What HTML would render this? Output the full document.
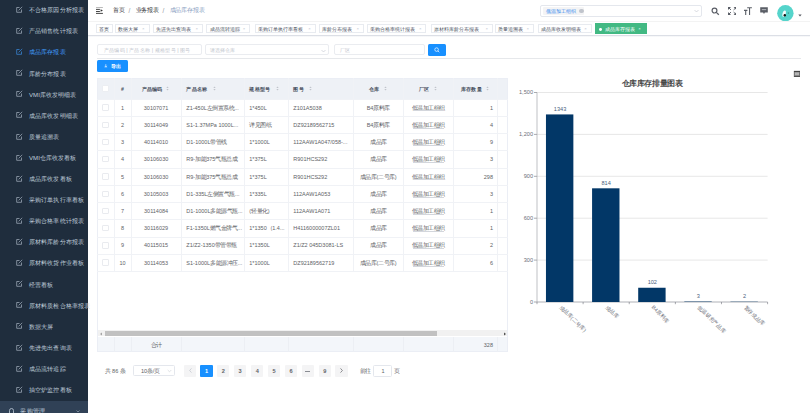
<!DOCTYPE html><html><head><meta charset="utf-8"><style>
*{margin:0;padding:0;box-sizing:border-box}
html,body{width:810px;height:413px;overflow:hidden;background:#fff;font-family:"Liberation Sans", sans-serif}
.ab{position:absolute;white-space:nowrap}
.t{position:absolute;white-space:nowrap;line-height:1}
i{font-style:normal;display:inline-block;width:1em;text-align:center}
.nocjk i{position:relative}
.cb{display:none}.nocjk .cb{display:inline}
.nocjk i::before{content:'';position:absolute;left:var(--bl,0.06em);right:var(--bl,0.06em);top:var(--bt,0.03em);height:var(--bh,0.8em);background:currentColor;opacity:var(--bo,0.3);border-radius:0.1em}
</style><script>(function(){var d=document.documentElement,s=document.createElement('span');s.style.cssText='position:absolute;left:-999px;top:0;font:100px "Liberation Sans";white-space:nowrap';s.textContent='库存';d.appendChild(s);var w=s.getBoundingClientRect().width;d.removeChild(s);if(w<180)d.className+=' nocjk';})();</script></head><body>
<div class="ab" style="left:0;top:0;width:88.3px;height:413px;background:#1f2d3d"></div><svg class="ab" style="left:15.9px;top:5.8999999999999995px" width="7" height="7" viewBox="0 0 7 7"><path d="M5.5 3.5V6.3H0.7V1.5H3.5" fill="none" stroke="#bfcbd9" stroke-width="0.6"/><path d="M2.6 4.4L6.2 0.8" stroke="#bfcbd9" stroke-width="0.6"/></svg><div class="t" style="left:29px;top:7.20px;font-size:6.1px;color:#bfcbd9"><i>不</i><i>合</i><i>格</i><i>原</i><i>因</i><i>分</i><i>析</i><i>报</i><i>表</i></div><svg class="ab" style="left:15.9px;top:27.0px" width="7" height="7" viewBox="0 0 7 7"><path d="M5.5 3.5V6.3H0.7V1.5H3.5" fill="none" stroke="#bfcbd9" stroke-width="0.6"/><path d="M2.6 4.4L6.2 0.8" stroke="#bfcbd9" stroke-width="0.6"/></svg><div class="t" style="left:29px;top:28.30px;font-size:6.1px;color:#bfcbd9"><i>产</i><i>品</i><i>销</i><i>售</i><i>统</i><i>计</i><i>报</i><i>表</i></div><svg class="ab" style="left:15.9px;top:48.10000000000001px" width="7" height="7" viewBox="0 0 7 7"><path d="M5.5 3.5V6.3H0.7V1.5H3.5" fill="none" stroke="#409eff" stroke-width="0.6"/><path d="M2.6 4.4L6.2 0.8" stroke="#409eff" stroke-width="0.6"/></svg><div class="t" style="left:29px;top:49.40px;font-size:6.1px;color:#409eff"><i>成</i><i>品</i><i>库</i><i>存</i><i>报</i><i>表</i></div><svg class="ab" style="left:15.9px;top:69.2px" width="7" height="7" viewBox="0 0 7 7"><path d="M5.5 3.5V6.3H0.7V1.5H3.5" fill="none" stroke="#bfcbd9" stroke-width="0.6"/><path d="M2.6 4.4L6.2 0.8" stroke="#bfcbd9" stroke-width="0.6"/></svg><div class="t" style="left:29px;top:70.50px;font-size:6.1px;color:#bfcbd9"><i>库</i><i>龄</i><i>分</i><i>布</i><i>报</i><i>表</i></div><svg class="ab" style="left:15.9px;top:90.30000000000001px" width="7" height="7" viewBox="0 0 7 7"><path d="M5.5 3.5V6.3H0.7V1.5H3.5" fill="none" stroke="#bfcbd9" stroke-width="0.6"/><path d="M2.6 4.4L6.2 0.8" stroke="#bfcbd9" stroke-width="0.6"/></svg><div class="t" style="left:29px;top:91.60px;font-size:6.1px;color:#bfcbd9">VMI<i>库</i><i>收</i><i>发</i><i>明</i><i>细</i><i>表</i></div><svg class="ab" style="left:15.9px;top:111.4px" width="7" height="7" viewBox="0 0 7 7"><path d="M5.5 3.5V6.3H0.7V1.5H3.5" fill="none" stroke="#bfcbd9" stroke-width="0.6"/><path d="M2.6 4.4L6.2 0.8" stroke="#bfcbd9" stroke-width="0.6"/></svg><div class="t" style="left:29px;top:112.70px;font-size:6.1px;color:#bfcbd9"><i>成</i><i>品</i><i>库</i><i>收</i><i>发</i><i>明</i><i>细</i><i>表</i></div><svg class="ab" style="left:15.9px;top:132.5px" width="7" height="7" viewBox="0 0 7 7"><path d="M5.5 3.5V6.3H0.7V1.5H3.5" fill="none" stroke="#bfcbd9" stroke-width="0.6"/><path d="M2.6 4.4L6.2 0.8" stroke="#bfcbd9" stroke-width="0.6"/></svg><div class="t" style="left:29px;top:133.80px;font-size:6.1px;color:#bfcbd9"><i>质</i><i>量</i><i>追</i><i>溯</i><i>表</i></div><svg class="ab" style="left:15.9px;top:153.6px" width="7" height="7" viewBox="0 0 7 7"><path d="M5.5 3.5V6.3H0.7V1.5H3.5" fill="none" stroke="#bfcbd9" stroke-width="0.6"/><path d="M2.6 4.4L6.2 0.8" stroke="#bfcbd9" stroke-width="0.6"/></svg><div class="t" style="left:29px;top:154.90px;font-size:6.1px;color:#bfcbd9">VMI<i>仓</i><i>库</i><i>收</i><i>发</i><i>看</i><i>板</i></div><svg class="ab" style="left:15.9px;top:174.7px" width="7" height="7" viewBox="0 0 7 7"><path d="M5.5 3.5V6.3H0.7V1.5H3.5" fill="none" stroke="#bfcbd9" stroke-width="0.6"/><path d="M2.6 4.4L6.2 0.8" stroke="#bfcbd9" stroke-width="0.6"/></svg><div class="t" style="left:29px;top:176.00px;font-size:6.1px;color:#bfcbd9"><i>成</i><i>品</i><i>库</i><i>收</i><i>发</i><i>看</i><i>板</i></div><svg class="ab" style="left:15.9px;top:195.79999999999998px" width="7" height="7" viewBox="0 0 7 7"><path d="M5.5 3.5V6.3H0.7V1.5H3.5" fill="none" stroke="#bfcbd9" stroke-width="0.6"/><path d="M2.6 4.4L6.2 0.8" stroke="#bfcbd9" stroke-width="0.6"/></svg><div class="t" style="left:29px;top:197.10px;font-size:6.1px;color:#bfcbd9"><i>采</i><i>购</i><i>订</i><i>单</i><i>执</i><i>行</i><i>率</i><i>看</i><i>板</i></div><svg class="ab" style="left:15.9px;top:216.89999999999998px" width="7" height="7" viewBox="0 0 7 7"><path d="M5.5 3.5V6.3H0.7V1.5H3.5" fill="none" stroke="#bfcbd9" stroke-width="0.6"/><path d="M2.6 4.4L6.2 0.8" stroke="#bfcbd9" stroke-width="0.6"/></svg><div class="t" style="left:29px;top:218.20px;font-size:6.1px;color:#bfcbd9"><i>采</i><i>购</i><i>合</i><i>格</i><i>率</i><i>统</i><i>计</i><i>报</i><i>表</i></div><svg class="ab" style="left:15.9px;top:238.0px" width="7" height="7" viewBox="0 0 7 7"><path d="M5.5 3.5V6.3H0.7V1.5H3.5" fill="none" stroke="#bfcbd9" stroke-width="0.6"/><path d="M2.6 4.4L6.2 0.8" stroke="#bfcbd9" stroke-width="0.6"/></svg><div class="t" style="left:29px;top:239.30px;font-size:6.1px;color:#bfcbd9"><i>原</i><i>材</i><i>料</i><i>库</i><i>龄</i><i>分</i><i>布</i><i>报</i><i>表</i></div><svg class="ab" style="left:15.9px;top:259.1px" width="7" height="7" viewBox="0 0 7 7"><path d="M5.5 3.5V6.3H0.7V1.5H3.5" fill="none" stroke="#bfcbd9" stroke-width="0.6"/><path d="M2.6 4.4L6.2 0.8" stroke="#bfcbd9" stroke-width="0.6"/></svg><div class="t" style="left:29px;top:260.40px;font-size:6.1px;color:#bfcbd9"><i>原</i><i>材</i><i>料</i><i>收</i><i>货</i><i>作</i><i>业</i><i>看</i><i>板</i></div><svg class="ab" style="left:15.9px;top:280.2px" width="7" height="7" viewBox="0 0 7 7"><path d="M5.5 3.5V6.3H0.7V1.5H3.5" fill="none" stroke="#bfcbd9" stroke-width="0.6"/><path d="M2.6 4.4L6.2 0.8" stroke="#bfcbd9" stroke-width="0.6"/></svg><div class="t" style="left:29px;top:281.50px;font-size:6.1px;color:#bfcbd9"><i>经</i><i>营</i><i>看</i><i>板</i></div><svg class="ab" style="left:15.9px;top:301.3px" width="7" height="7" viewBox="0 0 7 7"><path d="M5.5 3.5V6.3H0.7V1.5H3.5" fill="none" stroke="#bfcbd9" stroke-width="0.6"/><path d="M2.6 4.4L6.2 0.8" stroke="#bfcbd9" stroke-width="0.6"/></svg><div class="t" style="left:29px;top:302.60px;font-size:6.1px;color:#bfcbd9"><i>原</i><i>材</i><i>料</i><i>质</i><i>检</i><i>合</i><i>格</i><i>率</i><i>报</i><i>表</i></div><svg class="ab" style="left:15.9px;top:322.4px" width="7" height="7" viewBox="0 0 7 7"><path d="M5.5 3.5V6.3H0.7V1.5H3.5" fill="none" stroke="#bfcbd9" stroke-width="0.6"/><path d="M2.6 4.4L6.2 0.8" stroke="#bfcbd9" stroke-width="0.6"/></svg><div class="t" style="left:29px;top:323.70px;font-size:6.1px;color:#bfcbd9"><i>数</i><i>据</i><i>大</i><i>屏</i></div><svg class="ab" style="left:15.9px;top:343.5px" width="7" height="7" viewBox="0 0 7 7"><path d="M5.5 3.5V6.3H0.7V1.5H3.5" fill="none" stroke="#bfcbd9" stroke-width="0.6"/><path d="M2.6 4.4L6.2 0.8" stroke="#bfcbd9" stroke-width="0.6"/></svg><div class="t" style="left:29px;top:344.80px;font-size:6.1px;color:#bfcbd9"><i>先</i><i>进</i><i>先</i><i>出</i><i>查</i><i>询</i><i>表</i></div><svg class="ab" style="left:15.9px;top:364.6px" width="7" height="7" viewBox="0 0 7 7"><path d="M5.5 3.5V6.3H0.7V1.5H3.5" fill="none" stroke="#bfcbd9" stroke-width="0.6"/><path d="M2.6 4.4L6.2 0.8" stroke="#bfcbd9" stroke-width="0.6"/></svg><div class="t" style="left:29px;top:365.90px;font-size:6.1px;color:#bfcbd9"><i>成</i><i>品</i><i>流</i><i>转</i><i>追</i><i>踪</i></div><svg class="ab" style="left:15.9px;top:385.7px" width="7" height="7" viewBox="0 0 7 7"><path d="M5.5 3.5V6.3H0.7V1.5H3.5" fill="none" stroke="#bfcbd9" stroke-width="0.6"/><path d="M2.6 4.4L6.2 0.8" stroke="#bfcbd9" stroke-width="0.6"/></svg><div class="t" style="left:29px;top:387.00px;font-size:6.1px;color:#bfcbd9"><i>抽</i><i>空</i><i>炉</i><i>监</i><i>控</i><i>看</i><i>板</i></div><div class="ab" style="left:0;top:400.5px;width:88.3px;height:13px;background:#304156"></div><div class="t" style="left:20.4px;top:408px;font-size:6.2px;color:#bfcbd9"><i>采</i><i>购</i><i>管</i><i>理</i></div><svg class="ab" style="left:8.6px;top:407.5px" width="5" height="6" viewBox="0 0 5 6"><path d="M0.5 6V2.5A2 2 0 0 1 4.5 2.5V6" fill="none" stroke="#bfcbd9" stroke-width="0.8"/></svg><svg class="ab" style="left:76px;top:410px" width="4" height="3" viewBox="0 0 4 3"><path d="M0.5 0.5L2 2L3.5 0.5" fill="none" stroke="#bfcbd9" stroke-width="0.5"/></svg><svg class="ab" style="left:95.9px;top:6.9px" width="7" height="7" viewBox="0 0 7 7"><rect x="0" y="0.1" width="6.9" height="0.8" fill="#aaa"/><rect x="0" y="1.9" width="3.9" height="0.9" fill="#333"/><rect x="0" y="4.1" width="3.9" height="0.9" fill="#333"/><path d="M4.6 2.3L6.9 3.5L4.6 4.7Z" fill="#333"/><rect x="0" y="5.9" width="6.9" height="0.9" fill="#333"/></svg><div class="t" style="left:113.2px;top:8.2px;font-size:5.9px;color:#303133;font-weight:500"><i>首</i><i>页</i></div><div class="t" style="left:128.6px;top:8px;font-size:6.4px;color:#8e939b">/</div><div class="t" style="left:135.6px;top:8.2px;font-size:5.9px;color:#303133;font-weight:500"><i>业</i><i>务</i><i>报</i><i>表</i></div><div class="t" style="left:162.4px;top:8px;font-size:6.4px;color:#8e939b">/</div><div class="t" style="left:169.5px;top:8.2px;font-size:5.9px;color:#8aa0bf"><i>成</i><i>品</i><i>库</i><i>存</i><i>报</i><i>表</i></div><div class="ab" style="left:540.4px;top:5.3px;width:161.6px;height:11.8px;border:0.5px solid #e4e7ed;border-radius:2px"></div><div class="ab" style="left:543px;top:7.4px;width:40.6px;height:7.8px;background:#f4f4f5;border-radius:1px"></div><div class="t" style="left:546px;top:9px;font-size:5.0px;color:#2f86ef"><i>低</i><i>温</i><i>加</i><i>工</i><i>组</i><i>织</i></div><div class="ab" style="left:579.2px;top:9px;width:4.4px;height:4.4px;border-radius:50%;background:#c0c4cc"></div><svg class="ab" style="left:694px;top:9.2px" width="5" height="4" viewBox="0 0 5 4"><path d="M0.5 1L2.5 3L4.5 1" fill="none" stroke="#c0c4cc" stroke-width="0.6"/></svg><svg class="ab" style="left:711px;top:6.7px" width="9" height="9" viewBox="0 0 9 9"><circle cx="3.5" cy="3.6" r="2.4" fill="none" stroke="#5a5e66" stroke-width="1.2"/><path d="M5.3 5.4L7.8 7.8" stroke="#5a5e66" stroke-width="1.3"/></svg><svg class="ab" style="left:727.8px;top:6.8px" width="8.6" height="8" viewBox="0 0 8.6 8"><g fill="#5a5e66"><path d="M0 0H3L0 3Z"/><path d="M8.6 0H5.6L8.6 3Z"/><path d="M0 8H3L0 5Z"/><path d="M8.6 8H5.6L8.6 5Z"/></g><path d="M1 1L3 2.9M7.6 1L5.6 2.9M1 7L3 5.1M7.6 7L5.6 5.1" stroke="#5a5e66" stroke-width="1"/></svg><svg class="ab" style="left:744.2px;top:6.8px" width="8" height="8" viewBox="0 0 8 8"><path d="M3.2 0.7H7.9M5.55 0.7V8M0 3.4H3.4M1.7 3.4V8" fill="none" stroke="#5a5e66" stroke-width="1.1"/></svg><svg class="ab" style="left:760.4px;top:6.6px" width="8" height="7.5" viewBox="0 0 8 7.5"><path d="M0.2 0.2H7.8V5.5H4.9L4 6.9L3.1 5.5H0.2Z" fill="#5a5e66"/><rect x="1.8" y="2.3" width="4.4" height="0.8" fill="#c9ccd2"/></svg><svg class="ab" style="left:777px;top:4.6px" width="17" height="17" viewBox="0 0 17 17"><circle cx="8.4" cy="8.3" r="8.2" fill="#55d4cb"/><ellipse cx="7.1" cy="8.6" rx="1.6" ry="3.2" transform="rotate(15 7.1 8.6)" fill="#f4fbfb"/><circle cx="7.8" cy="10.2" r="1.2" fill="#111"/><circle cx="11.4" cy="8.1" r="0.8" fill="#3a9e98"/></svg><svg class="ab" style="left:798px;top:13.5px" width="4" height="3" viewBox="0 0 4 3"><path d="M0.3 0.5L2 2.5L3.7 0.5Z" fill="#5a5e66"/></svg><div class="ab" style="left:88.3px;top:20.8px;width:722px;height:1.2px;background:linear-gradient(#ececec,#fafafa)"></div><div class="ab" style="left:88.3px;top:35px;width:722px;height:0.6px;background:#dcdfe6"></div><div class="ab" style="left:88.3px;top:35.6px;width:722px;height:1.2px;background:linear-gradient(#eef0f3,#fff)"></div><div class="ab" style="left:96px;top:23.8px;width:16.5px;height:9.5px;border:0.5px solid #e8ebf0;background:#fff"></div><div class="t" style="left:99.2px;top:26.8px;font-size:5.0px;color:#495060"><i>首</i><i>页</i></div><div class="ab" style="left:115px;top:23.8px;width:34.6px;height:9.5px;border:0.5px solid #e8ebf0;background:#fff"></div><div class="t" style="left:118.2px;top:26.8px;font-size:5.0px;color:#495060"><i>数</i><i>据</i><i>大</i><i>屏</i></div><div class="t" style="left:142.0px;top:27.1px;font-size:4.2px;color:#b4bccc">×</div><div class="ab" style="left:153.1px;top:23.8px;width:50.1px;height:9.5px;border:0.5px solid #e8ebf0;background:#fff"></div><div class="t" style="left:156.3px;top:26.8px;font-size:5.0px;color:#495060"><i>先</i><i>进</i><i>先</i><i>出</i><i>查</i><i>询</i><i>表</i></div><div class="t" style="left:195.6px;top:27.1px;font-size:4.2px;color:#b4bccc">×</div><div class="ab" style="left:206.3px;top:23.8px;width:44.1px;height:9.5px;border:0.5px solid #e8ebf0;background:#fff"></div><div class="t" style="left:209.5px;top:26.8px;font-size:5.0px;color:#495060"><i>成</i><i>品</i><i>流</i><i>转</i><i>追</i><i>踪</i></div><div class="t" style="left:242.8px;top:27.1px;font-size:4.2px;color:#b4bccc">×</div><div class="ab" style="left:255px;top:23.8px;width:60.8px;height:9.5px;border:0.5px solid #e8ebf0;background:#fff"></div><div class="t" style="left:258.2px;top:26.8px;font-size:5.0px;color:#495060"><i>采</i><i>购</i><i>订</i><i>单</i><i>执</i><i>行</i><i>率</i><i>看</i><i>板</i></div><div class="t" style="left:308.2px;top:27.1px;font-size:4.2px;color:#b4bccc">×</div><div class="ab" style="left:319.1px;top:23.8px;width:45.1px;height:9.5px;border:0.5px solid #e8ebf0;background:#fff"></div><div class="t" style="left:322.3px;top:26.8px;font-size:5.0px;color:#495060"><i>库</i><i>龄</i><i>分</i><i>布</i><i>报</i><i>表</i></div><div class="t" style="left:356.6px;top:27.1px;font-size:4.2px;color:#b4bccc">×</div><div class="ab" style="left:366.9px;top:23.8px;width:59.6px;height:9.5px;border:0.5px solid #e8ebf0;background:#fff"></div><div class="t" style="left:370.1px;top:26.8px;font-size:5.0px;color:#495060"><i>采</i><i>购</i><i>合</i><i>格</i><i>率</i><i>统</i><i>计</i><i>报</i><i>表</i></div><div class="t" style="left:418.9px;top:27.1px;font-size:4.2px;color:#b4bccc">×</div><div class="ab" style="left:430.5px;top:23.8px;width:62.6px;height:9.5px;border:0.5px solid #e8ebf0;background:#fff"></div><div class="t" style="left:433.7px;top:26.8px;font-size:5.0px;color:#495060"><i>原</i><i>材</i><i>料</i><i>库</i><i>龄</i><i>分</i><i>布</i><i>报</i><i>表</i></div><div class="t" style="left:485.5px;top:27.1px;font-size:4.2px;color:#b4bccc">×</div><div class="ab" style="left:494.8px;top:23.8px;width:39.3px;height:9.5px;border:0.5px solid #e8ebf0;background:#fff"></div><div class="t" style="left:498.0px;top:26.8px;font-size:5.0px;color:#495060"><i>质</i><i>量</i><i>追</i><i>溯</i><i>表</i></div><div class="t" style="left:526.5px;top:27.1px;font-size:4.2px;color:#b4bccc">×</div><div class="ab" style="left:537.5px;top:23.8px;width:54.3px;height:9.5px;border:0.5px solid #e8ebf0;background:#fff"></div><div class="t" style="left:540.7px;top:26.8px;font-size:5.0px;color:#495060"><i>成</i><i>品</i><i>库</i><i>收</i><i>发</i><i>明</i><i>细</i><i>表</i></div><div class="t" style="left:584.2px;top:27.1px;font-size:4.2px;color:#b4bccc">×</div><div class="ab" style="left:595.2px;top:22.8px;width:51.8px;height:11px;background:#42b983;border:0.5px solid #42b983"></div><div class="ab" style="left:599.3px;top:27.8px;width:2.8px;height:2.8px;border-radius:50%;background:#fff"></div><div class="t" style="left:605px;top:26.8px;font-size:5.0px;color:#fff"><i>成</i><i>品</i><i>库</i><i>存</i><i>报</i><i>表</i></div><div class="t" style="left:638.3px;top:27.1px;font-size:4.2px;color:#fff">×</div><div class="ab" style="left:96.9px;top:44.3px;width:105px;height:11.2px;border:0.5px solid #eaecf0;border-radius:2px"></div><div class="t" style="left:103.5px;top:47.6px;font-size:5.3px;color:#c0c4cc"><i>产</i><i>品</i><i>编</i><i>码</i> | <i>产</i><i>品</i><i>名</i><i>称</i> | <i>规</i><i>格</i><i>型</i><i>号</i> | <i>图</i><i>号</i></div><div class="ab" style="left:204.5px;top:44.3px;width:124.8px;height:11.2px;border:0.5px solid #eaecf0;border-radius:2px"></div><div class="t" style="left:209.5px;top:47.8px;font-size:5.2px;color:#c0c4cc"><i>请</i><i>选</i><i>择</i><i>仓</i><i>库</i></div><svg class="ab" style="left:321px;top:48.5px" width="5" height="4" viewBox="0 0 5 4"><path d="M0.5 1L2.5 3L4.5 1" fill="none" stroke="#c0c4cc" stroke-width="0.6"/></svg><div class="ab" style="left:333.6px;top:44.3px;width:91.2px;height:11.2px;border:0.5px solid #eaecf0;border-radius:2px"></div><div class="t" style="left:340px;top:47.6px;font-size:5.2px;color:#c0c4cc"><i>厂</i><i>区</i></div><div class="ab" style="left:427.8px;top:43.9px;width:18.3px;height:12px;background:#1890ff;border-radius:1.5px"></div><svg class="ab" style="left:434px;top:47px" width="6" height="6" viewBox="0 0 6 6"><circle cx="2.6" cy="2.6" r="1.8" fill="none" stroke="#fff" stroke-width="0.7"/><path d="M3.9 3.9L5.3 5.3" stroke="#fff" stroke-width="0.7"/></svg><div class="ab" style="left:96.9px;top:58.4px;width:704px;height:0.6px;background:#e6e8eb"></div><div class="ab" style="left:96.9px;top:59.8px;width:31.1px;height:12.2px;background:#1890ff;border-radius:1.5px"></div><svg class="ab" style="left:104.2px;top:63.8px" width="3.6" height="4.6" viewBox="0 0 3.6 4.6"><path d="M1.8 0.2V3M0.6 1.9L1.8 3.1L3 1.9M0.3 4.2H3.3" fill="none" stroke="#fff" stroke-width="0.6"/></svg><div class="t" style="left:110.9px;top:63.6px;font-size:5.2px;color:#fff;font-weight:bold"><i>导</i><i>出</i></div><div class="ab" style="left:97.0px;top:78.3px;width:410.5px;height:20.60000000000001px;background:#eef1f6"></div><div class="ab" style="left:97.0px;top:336.5px;width:410.5px;height:15.5px;background:#f3f6fa"></div><div class="ab" style="left:97.0px;top:78.3px;width:410.5px;height:273.7px;border:0.5px solid #ebeef5"></div><div class="ab" style="left:97.0px;top:98.60px;width:410.5px;height:0.6px;background:#f0f2f6"></div><div class="ab" style="left:97.0px;top:115.84px;width:410.5px;height:0.6px;background:#f0f2f6"></div><div class="ab" style="left:97.0px;top:133.08px;width:410.5px;height:0.6px;background:#f0f2f6"></div><div class="ab" style="left:97.0px;top:150.32px;width:410.5px;height:0.6px;background:#f0f2f6"></div><div class="ab" style="left:97.0px;top:167.56px;width:410.5px;height:0.6px;background:#f0f2f6"></div><div class="ab" style="left:97.0px;top:184.80px;width:410.5px;height:0.6px;background:#f0f2f6"></div><div class="ab" style="left:97.0px;top:202.04px;width:410.5px;height:0.6px;background:#f0f2f6"></div><div class="ab" style="left:97.0px;top:219.28px;width:410.5px;height:0.6px;background:#f0f2f6"></div><div class="ab" style="left:97.0px;top:236.52px;width:410.5px;height:0.6px;background:#f0f2f6"></div><div class="ab" style="left:97.0px;top:253.76px;width:410.5px;height:0.6px;background:#f0f2f6"></div><div class="ab" style="left:97.0px;top:271.00px;width:410.5px;height:0.6px;background:#f0f2f6"></div><div class="ab" style="left:114.10px;top:78.3px;width:0.6px;height:193.00px;background:#f0f2f6"></div><div class="ab" style="left:114.10px;top:336.5px;width:0.6px;height:15.5px;background:#eceff4"></div><div class="ab" style="left:130.50px;top:78.3px;width:0.6px;height:193.00px;background:#f0f2f6"></div><div class="ab" style="left:130.50px;top:336.5px;width:0.6px;height:15.5px;background:#eceff4"></div><div class="ab" style="left:181.00px;top:78.3px;width:0.6px;height:193.00px;background:#f0f2f6"></div><div class="ab" style="left:181.00px;top:336.5px;width:0.6px;height:15.5px;background:#eceff4"></div><div class="ab" style="left:244.00px;top:78.3px;width:0.6px;height:193.00px;background:#f0f2f6"></div><div class="ab" style="left:244.00px;top:336.5px;width:0.6px;height:15.5px;background:#eceff4"></div><div class="ab" style="left:288.00px;top:78.3px;width:0.6px;height:193.00px;background:#f0f2f6"></div><div class="ab" style="left:288.00px;top:336.5px;width:0.6px;height:15.5px;background:#eceff4"></div><div class="ab" style="left:353.00px;top:78.3px;width:0.6px;height:193.00px;background:#f0f2f6"></div><div class="ab" style="left:353.00px;top:336.5px;width:0.6px;height:15.5px;background:#eceff4"></div><div class="ab" style="left:403.00px;top:78.3px;width:0.6px;height:193.00px;background:#f0f2f6"></div><div class="ab" style="left:403.00px;top:336.5px;width:0.6px;height:15.5px;background:#eceff4"></div><div class="ab" style="left:453.00px;top:78.3px;width:0.6px;height:193.00px;background:#f0f2f6"></div><div class="ab" style="left:453.00px;top:336.5px;width:0.6px;height:15.5px;background:#eceff4"></div><div class="ab" style="left:497.20px;top:78.3px;width:0.6px;height:193.00px;background:#f0f2f6"></div><div class="ab" style="left:497.20px;top:336.5px;width:0.6px;height:15.5px;background:#eceff4"></div><div class="ab" style="left:97.5px;top:330.4px;width:409.5px;height:6.1px;background:#f1f1f1"></div><div class="ab" style="left:104.5px;top:331px;width:332.6px;height:5px;background:#c1c1c1"></div><svg class="ab" style="left:98.5px;top:331.5px" width="4" height="4" viewBox="0 0 4 4"><path d="M3 0.5L1 2L3 3.5Z" fill="#a3a3a3"/></svg><svg class="ab" style="left:502.5px;top:331.5px" width="4" height="4" viewBox="0 0 4 4"><path d="M1 0.5L3 2L1 3.5Z" fill="#505050"/></svg><div class="ab" style="left:102.2px;top:85.40px;width:6.4px;height:6.4px;background:#fff;border:0.5px solid #eceef2;border-radius:1px"></div><div class="t" style="left:121.10px;top:86.73px;font-size:5.2px;color:#48505e;font-weight:bold">#</div><div class="t" style="left:141.65px;top:86.73px;font-size:5.2px;color:#48505e;font-weight:bold"><i>产</i><i>品</i><i>编</i><i>码</i></div><svg class="ab" style="left:166.45px;top:86.10px" width="3" height="5" viewBox="0 0 3 5"><path d="M0.3 2L1.5 0.6L2.7 2Z M0.3 3L1.5 4.4L2.7 3Z" fill="#c0c4cc"/></svg><div class="t" style="left:186.30px;top:86.73px;font-size:5.2px;color:#48505e;font-weight:bold"><i>产</i><i>品</i><i>名</i><i>称</i></div><svg class="ab" style="left:212.60px;top:86.10px" width="3" height="5" viewBox="0 0 3 5"><path d="M0.3 2L1.5 0.6L2.7 2Z M0.3 3L1.5 4.4L2.7 3Z" fill="#c0c4cc"/></svg><div class="t" style="left:249.30px;top:86.73px;font-size:5.2px;color:#48505e;font-weight:bold"><i>规</i><i>格</i><i>型</i><i>号</i></div><svg class="ab" style="left:275.60px;top:86.10px" width="3" height="5" viewBox="0 0 3 5"><path d="M0.3 2L1.5 0.6L2.7 2Z M0.3 3L1.5 4.4L2.7 3Z" fill="#c0c4cc"/></svg><div class="t" style="left:293.30px;top:86.73px;font-size:5.2px;color:#48505e;font-weight:bold"><i>图</i><i>号</i></div><svg class="ab" style="left:309.20px;top:86.10px" width="3" height="5" viewBox="0 0 3 5"><path d="M0.3 2L1.5 0.6L2.7 2Z M0.3 3L1.5 4.4L2.7 3Z" fill="#c0c4cc"/></svg><div class="t" style="left:369.10px;top:86.73px;font-size:5.2px;color:#48505e;font-weight:bold"><i>仓</i><i>库</i></div><svg class="ab" style="left:383.50px;top:86.10px" width="3" height="5" viewBox="0 0 3 5"><path d="M0.3 2L1.5 0.6L2.7 2Z M0.3 3L1.5 4.4L2.7 3Z" fill="#c0c4cc"/></svg><div class="t" style="left:419.10px;top:86.73px;font-size:5.2px;color:#48505e;font-weight:bold"><i>厂</i><i>区</i></div><svg class="ab" style="left:433.50px;top:86.10px" width="3" height="5" viewBox="0 0 3 5"><path d="M0.3 2L1.5 0.6L2.7 2Z M0.3 3L1.5 4.4L2.7 3Z" fill="#c0c4cc"/></svg><div class="t" style="left:461.00px;top:86.73px;font-size:5.2px;color:#48505e;font-weight:bold"><i>库</i><i>存</i><i>数</i><i>量</i></div><svg class="ab" style="left:485.80px;top:86.10px" width="3" height="5" viewBox="0 0 3 5"><path d="M0.3 2L1.5 0.6L2.7 2Z M0.3 3L1.5 4.4L2.7 3Z" fill="#c0c4cc"/></svg><div class="ab" style="left:102.2px;top:104.32px;width:6.4px;height:6.4px;background:#fff;border:0.5px solid #e9ebef;border-radius:1px"></div><div class="t" style="left:114.60px;top:105.54px;width:16px;text-align:center;font-size:5.5px;color:#606266;">1</div><div class="t" style="left:131.05px;top:105.54px;width:50px;text-align:center;font-size:5.5px;color:#606266;">30107071</div><div class="t" style="left:186.30px;top:105.54px;font-size:5.5px;color:#606266;">Z1-450L<i>左</i><i>倒</i><i>置</i><i>系</i><i>统</i>...</div><div class="t" style="left:249.30px;top:105.54px;font-size:5.5px;color:#606266;">1*450L</div><div class="t" style="left:293.30px;top:105.54px;font-size:5.5px;color:#606266;">Z101A5038</div><div class="t" style="left:353.30px;top:105.54px;width:50px;text-align:center;font-size:5.5px;color:#606266;">B4<i>原</i><i>料</i><i>库</i></div><div class="t" style="left:403.30px;top:105.54px;width:50px;text-align:center;font-size:5.5px;color:#606266;"><i>低</i><i>温</i><i>加</i><i>工</i><i>组</i><i>织</i></div><div class="ab" style="left:412.80px;top:110.42px;width:31px;height:0.5px;background:#d3d6dc"></div><div class="t" style="left:453.00px;top:105.54px;width:40px;text-align:right;font-size:5.5px;color:#606266;">1</div><div class="ab" style="left:102.2px;top:121.56px;width:6.4px;height:6.4px;background:#fff;border:0.5px solid #e9ebef;border-radius:1px"></div><div class="t" style="left:114.60px;top:122.78px;width:16px;text-align:center;font-size:5.5px;color:#606266;">2</div><div class="t" style="left:131.05px;top:122.78px;width:50px;text-align:center;font-size:5.5px;color:#606266;">30114049</div><div class="t" style="left:186.30px;top:122.78px;font-size:5.5px;color:#606266;">S1-1.37MPa 1000L...</div><div class="t" style="left:249.30px;top:122.78px;font-size:5.5px;color:#606266;"><i>详</i><i>见</i><i>图</i><i>纸</i></div><div class="t" style="left:293.30px;top:122.78px;font-size:5.5px;color:#606266;">DZ92189562715</div><div class="t" style="left:353.30px;top:122.78px;width:50px;text-align:center;font-size:5.5px;color:#606266;">B4<i>原</i><i>料</i><i>库</i></div><div class="t" style="left:403.30px;top:122.78px;width:50px;text-align:center;font-size:5.5px;color:#606266;"><i>低</i><i>温</i><i>加</i><i>工</i><i>组</i><i>织</i></div><div class="ab" style="left:412.80px;top:127.66px;width:31px;height:0.5px;background:#d3d6dc"></div><div class="t" style="left:453.00px;top:122.78px;width:40px;text-align:right;font-size:5.5px;color:#606266;">4</div><div class="ab" style="left:102.2px;top:138.80px;width:6.4px;height:6.4px;background:#fff;border:0.5px solid #e9ebef;border-radius:1px"></div><div class="t" style="left:114.60px;top:140.02px;width:16px;text-align:center;font-size:5.5px;color:#606266;">3</div><div class="t" style="left:131.05px;top:140.02px;width:50px;text-align:center;font-size:5.5px;color:#606266;">40114010</div><div class="t" style="left:186.30px;top:140.02px;font-size:5.5px;color:#606266;">D1-1000L<i>带</i><i>管</i><i>线</i></div><div class="t" style="left:249.30px;top:140.02px;font-size:5.5px;color:#606266;">1*1000L</div><div class="t" style="left:293.30px;top:140.02px;font-size:5.5px;color:#606266;">112AAW1A047/058-...</div><div class="t" style="left:353.30px;top:140.02px;width:50px;text-align:center;font-size:5.5px;color:#606266;"><i>成</i><i>品</i><i>库</i></div><div class="t" style="left:403.30px;top:140.02px;width:50px;text-align:center;font-size:5.5px;color:#606266;"><i>低</i><i>温</i><i>加</i><i>工</i><i>组</i><i>织</i></div><div class="ab" style="left:412.80px;top:144.90px;width:31px;height:0.5px;background:#d3d6dc"></div><div class="t" style="left:453.00px;top:140.02px;width:40px;text-align:right;font-size:5.5px;color:#606266;">9</div><div class="ab" style="left:102.2px;top:156.04px;width:6.4px;height:6.4px;background:#fff;border:0.5px solid #e9ebef;border-radius:1px"></div><div class="t" style="left:114.60px;top:157.26px;width:16px;text-align:center;font-size:5.5px;color:#606266;">4</div><div class="t" style="left:131.05px;top:157.26px;width:50px;text-align:center;font-size:5.5px;color:#606266;">30106030</div><div class="t" style="left:186.30px;top:157.26px;font-size:5.5px;color:#606266;">R9-<i>加</i><i>能</i>375<i>气</i><i>瓶</i><i>总</i><i>成</i></div><div class="t" style="left:249.30px;top:157.26px;font-size:5.5px;color:#606266;">1*375L</div><div class="t" style="left:293.30px;top:157.26px;font-size:5.5px;color:#606266;">R901HCS292</div><div class="t" style="left:353.30px;top:157.26px;width:50px;text-align:center;font-size:5.5px;color:#606266;"><i>成</i><i>品</i><i>库</i></div><div class="t" style="left:403.30px;top:157.26px;width:50px;text-align:center;font-size:5.5px;color:#606266;"><i>低</i><i>温</i><i>加</i><i>工</i><i>组</i><i>织</i></div><div class="ab" style="left:412.80px;top:162.14px;width:31px;height:0.5px;background:#d3d6dc"></div><div class="t" style="left:453.00px;top:157.26px;width:40px;text-align:right;font-size:5.5px;color:#606266;">3</div><div class="ab" style="left:102.2px;top:173.28px;width:6.4px;height:6.4px;background:#fff;border:0.5px solid #e9ebef;border-radius:1px"></div><div class="t" style="left:114.60px;top:174.50px;width:16px;text-align:center;font-size:5.5px;color:#606266;">5</div><div class="t" style="left:131.05px;top:174.50px;width:50px;text-align:center;font-size:5.5px;color:#606266;">30106030</div><div class="t" style="left:186.30px;top:174.50px;font-size:5.5px;color:#606266;">R9-<i>加</i><i>能</i>375<i>气</i><i>瓶</i><i>总</i><i>成</i></div><div class="t" style="left:249.30px;top:174.50px;font-size:5.5px;color:#606266;">1*375L</div><div class="t" style="left:293.30px;top:174.50px;font-size:5.5px;color:#606266;">R901HCS292</div><div class="t" style="left:353.30px;top:174.50px;width:50px;text-align:center;font-size:5.5px;color:#606266;"><i>成</i><i>品</i><i>库</i>(<i>二</i><i>号</i><i>库</i>)</div><div class="t" style="left:403.30px;top:174.50px;width:50px;text-align:center;font-size:5.5px;color:#606266;"><i>低</i><i>温</i><i>加</i><i>工</i><i>组</i><i>织</i></div><div class="ab" style="left:412.80px;top:179.38px;width:31px;height:0.5px;background:#d3d6dc"></div><div class="t" style="left:453.00px;top:174.50px;width:40px;text-align:right;font-size:5.5px;color:#606266;">298</div><div class="ab" style="left:102.2px;top:190.52px;width:6.4px;height:6.4px;background:#fff;border:0.5px solid #e9ebef;border-radius:1px"></div><div class="t" style="left:114.60px;top:191.74px;width:16px;text-align:center;font-size:5.5px;color:#606266;">6</div><div class="t" style="left:131.05px;top:191.74px;width:50px;text-align:center;font-size:5.5px;color:#606266;">30105003</div><div class="t" style="left:186.30px;top:191.74px;font-size:5.5px;color:#606266;">D1-335L<i>左</i><i>侧</i><i>置</i><i>气</i><i>瓶</i>...</div><div class="t" style="left:249.30px;top:191.74px;font-size:5.5px;color:#606266;">1*335L</div><div class="t" style="left:293.30px;top:191.74px;font-size:5.5px;color:#606266;">112AAW1A053</div><div class="t" style="left:353.30px;top:191.74px;width:50px;text-align:center;font-size:5.5px;color:#606266;"><i>成</i><i>品</i><i>库</i></div><div class="t" style="left:403.30px;top:191.74px;width:50px;text-align:center;font-size:5.5px;color:#606266;"><i>低</i><i>温</i><i>加</i><i>工</i><i>组</i><i>织</i></div><div class="ab" style="left:412.80px;top:196.62px;width:31px;height:0.5px;background:#d3d6dc"></div><div class="t" style="left:453.00px;top:191.74px;width:40px;text-align:right;font-size:5.5px;color:#606266;">3</div><div class="ab" style="left:102.2px;top:207.76px;width:6.4px;height:6.4px;background:#fff;border:0.5px solid #e9ebef;border-radius:1px"></div><div class="t" style="left:114.60px;top:208.98px;width:16px;text-align:center;font-size:5.5px;color:#606266;">7</div><div class="t" style="left:131.05px;top:208.98px;width:50px;text-align:center;font-size:5.5px;color:#606266;">30114084</div><div class="t" style="left:186.30px;top:208.98px;font-size:5.5px;color:#606266;">D1-1000L<i>多</i><i>能</i><i>源</i><i>气</i><i>瓶</i>...</div><div class="t" style="left:249.30px;top:208.98px;font-size:5.5px;color:#606266;">(<i>轻</i><i>量</i><i>化</i>)</div><div class="t" style="left:293.30px;top:208.98px;font-size:5.5px;color:#606266;">112AAW1A071</div><div class="t" style="left:353.30px;top:208.98px;width:50px;text-align:center;font-size:5.5px;color:#606266;"><i>成</i><i>品</i><i>库</i></div><div class="t" style="left:403.30px;top:208.98px;width:50px;text-align:center;font-size:5.5px;color:#606266;"><i>低</i><i>温</i><i>加</i><i>工</i><i>组</i><i>织</i></div><div class="ab" style="left:412.80px;top:213.86px;width:31px;height:0.5px;background:#d3d6dc"></div><div class="t" style="left:453.00px;top:208.98px;width:40px;text-align:right;font-size:5.5px;color:#606266;">1</div><div class="ab" style="left:102.2px;top:225.00px;width:6.4px;height:6.4px;background:#fff;border:0.5px solid #e9ebef;border-radius:1px"></div><div class="t" style="left:114.60px;top:226.22px;width:16px;text-align:center;font-size:5.5px;color:#606266;">8</div><div class="t" style="left:131.05px;top:226.22px;width:50px;text-align:center;font-size:5.5px;color:#606266;">30116029</div><div class="t" style="left:186.30px;top:226.22px;font-size:5.5px;color:#606266;">F1-1350L<i>燃</i><i>气</i><i>金</i><i>牌</i><i>气</i>...</div><div class="t" style="left:249.30px;top:226.22px;font-size:5.5px;color:#606266;">1*1350<i>（</i>1.4...</div><div class="t" style="left:293.30px;top:226.22px;font-size:5.5px;color:#606266;">H4116000007ZL01</div><div class="t" style="left:353.30px;top:226.22px;width:50px;text-align:center;font-size:5.5px;color:#606266;"><i>成</i><i>品</i><i>库</i></div><div class="t" style="left:403.30px;top:226.22px;width:50px;text-align:center;font-size:5.5px;color:#606266;"><i>低</i><i>温</i><i>加</i><i>工</i><i>组</i><i>织</i></div><div class="ab" style="left:412.80px;top:231.10px;width:31px;height:0.5px;background:#d3d6dc"></div><div class="t" style="left:453.00px;top:226.22px;width:40px;text-align:right;font-size:5.5px;color:#606266;">1</div><div class="ab" style="left:102.2px;top:242.24px;width:6.4px;height:6.4px;background:#fff;border:0.5px solid #e9ebef;border-radius:1px"></div><div class="t" style="left:114.60px;top:243.46px;width:16px;text-align:center;font-size:5.5px;color:#606266;">9</div><div class="t" style="left:131.05px;top:243.46px;width:50px;text-align:center;font-size:5.5px;color:#606266;">40115015</div><div class="t" style="left:186.30px;top:243.46px;font-size:5.5px;color:#606266;">Z1/Z2-1350<i>带</i><i>管</i><i>带</i><i>瓶</i></div><div class="t" style="left:249.30px;top:243.46px;font-size:5.5px;color:#606266;">1*1350L</div><div class="t" style="left:293.30px;top:243.46px;font-size:5.5px;color:#606266;">Z1/Z2 045D3081-LS</div><div class="t" style="left:353.30px;top:243.46px;width:50px;text-align:center;font-size:5.5px;color:#606266;"><i>成</i><i>品</i><i>库</i></div><div class="t" style="left:403.30px;top:243.46px;width:50px;text-align:center;font-size:5.5px;color:#606266;"><i>低</i><i>温</i><i>加</i><i>工</i><i>组</i><i>织</i></div><div class="ab" style="left:412.80px;top:248.34px;width:31px;height:0.5px;background:#d3d6dc"></div><div class="t" style="left:453.00px;top:243.46px;width:40px;text-align:right;font-size:5.5px;color:#606266;">2</div><div class="ab" style="left:102.2px;top:259.48px;width:6.4px;height:6.4px;background:#fff;border:0.5px solid #e9ebef;border-radius:1px"></div><div class="t" style="left:114.60px;top:260.70px;width:16px;text-align:center;font-size:5.5px;color:#606266;">10</div><div class="t" style="left:131.05px;top:260.70px;width:50px;text-align:center;font-size:5.5px;color:#606266;">30114053</div><div class="t" style="left:186.30px;top:260.70px;font-size:5.5px;color:#606266;">S1-1000L<i>多</i><i>能</i><i>源</i><i>冲</i><i>压</i>...</div><div class="t" style="left:249.30px;top:260.70px;font-size:5.5px;color:#606266;">1*1000L</div><div class="t" style="left:293.30px;top:260.70px;font-size:5.5px;color:#606266;">DZ92189562719</div><div class="t" style="left:353.30px;top:260.70px;width:50px;text-align:center;font-size:5.5px;color:#606266;"><i>成</i><i>品</i><i>库</i>(<i>二</i><i>号</i><i>库</i>)</div><div class="t" style="left:403.30px;top:260.70px;width:50px;text-align:center;font-size:5.5px;color:#606266;"><i>低</i><i>温</i><i>加</i><i>工</i><i>组</i><i>织</i></div><div class="ab" style="left:412.80px;top:265.58px;width:31px;height:0.5px;background:#d3d6dc"></div><div class="t" style="left:453.00px;top:260.70px;width:40px;text-align:right;font-size:5.5px;color:#606266;">6</div><div class="t" style="left:131.05px;top:342.82px;width:50px;text-align:center;font-size:5.5px;color:#606266;"><i>合</i><i>计</i></div><div class="t" style="left:453.00px;top:342.82px;width:40px;text-align:right;font-size:5.5px;color:#606266;">328</div><div class="t" style="left:104.90px;top:368.98px;font-size:5.6px;color:#606266;"><i>共</i> 86 <i>条</i></div><div class="ab" style="left:133.3px;top:365.3px;width:41.4px;height:11.2px;border:0.5px solid #e4e7ed;border-radius:1.5px"></div><div class="t" style="left:141.00px;top:368.98px;font-size:5.6px;color:#606266;">10<i>条</i>/<i>页</i></div><svg class="ab" style="left:167px;top:368.8px" width="5" height="4" viewBox="0 0 5 4"><path d="M0.7 1L2.5 2.8L4.3 1" fill="none" stroke="#c0c4cc" stroke-width="0.5"/></svg><div class="ab" style="left:184px;top:364.9px;width:12.3px;height:12.1px;background:#f4f4f5;border-radius:1px"></div><svg class="ab" style="left:188.60px;top:368.40px" width="3" height="5" viewBox="0 0 3 5"><path d="M2.5 0.4L0.6 2.5L2.5 4.6" fill="none" stroke="#c0c4cc" stroke-width="0.7"/></svg><div class="ab" style="left:200.3px;top:364.9px;width:12.3px;height:12.1px;background:#1890ff;border-radius:1px"></div><div class="t" style="left:200.30px;top:368.98px;width:12.3px;text-align:center;font-size:5.6px;color:#fff;font-weight:bold">1</div><div class="ab" style="left:217.1px;top:364.9px;width:12.3px;height:12.1px;background:#f4f4f5;border-radius:1px"></div><div class="t" style="left:217.10px;top:368.98px;width:12.3px;text-align:center;font-size:5.6px;color:#606266;font-weight:bold">2</div><div class="ab" style="left:234px;top:364.9px;width:12.3px;height:12.1px;background:#f4f4f5;border-radius:1px"></div><div class="t" style="left:234.00px;top:368.98px;width:12.3px;text-align:center;font-size:5.6px;color:#606266;font-weight:bold">3</div><div class="ab" style="left:251.1px;top:364.9px;width:12.3px;height:12.1px;background:#f4f4f5;border-radius:1px"></div><div class="t" style="left:251.10px;top:368.98px;width:12.3px;text-align:center;font-size:5.6px;color:#606266;font-weight:bold">4</div><div class="ab" style="left:268px;top:364.9px;width:12.3px;height:12.1px;background:#f4f4f5;border-radius:1px"></div><div class="t" style="left:268.00px;top:368.98px;width:12.3px;text-align:center;font-size:5.6px;color:#606266;font-weight:bold">5</div><div class="ab" style="left:284.9px;top:364.9px;width:12.3px;height:12.1px;background:#f4f4f5;border-radius:1px"></div><div class="t" style="left:284.90px;top:368.98px;width:12.3px;text-align:center;font-size:5.6px;color:#606266;font-weight:bold">6</div><div class="ab" style="left:301.7px;top:364.9px;width:12.3px;height:12.1px;background:#f4f4f5;border-radius:1px"></div><div class="ab" style="left:305.30px;top:370.70px;width:5px;height:0.7px;background:#8a8d93"></div><div class="ab" style="left:318.6px;top:364.9px;width:12.3px;height:12.1px;background:#f4f4f5;border-radius:1px"></div><div class="t" style="left:318.60px;top:368.98px;width:12.3px;text-align:center;font-size:5.6px;color:#606266;font-weight:bold">9</div><div class="ab" style="left:335.4px;top:364.9px;width:12.3px;height:12.1px;background:#f4f4f5;border-radius:1px"></div><svg class="ab" style="left:340.20px;top:368.40px" width="3" height="5" viewBox="0 0 3 5"><path d="M0.5 0.4L2.4 2.5L0.5 4.6" fill="none" stroke="#606266" stroke-width="0.7"/></svg><div class="t" style="left:359.80px;top:368.98px;font-size:5.6px;color:#606266;"><i>前</i><i>往</i></div><div class="ab" style="left:373px;top:365.2px;width:19.4px;height:11.4px;border:0.5px solid #e4e7ed;border-radius:1.5px"></div><div class="t" style="left:378.00px;top:369.02px;width:10px;text-align:center;font-size:5.5px;color:#606266;">1</div><div class="t" style="left:394.30px;top:368.98px;font-size:5.6px;color:#606266;"><i>页</i></div><svg class="ab" style="left:0;top:0" width="810" height="413" viewBox="0 0 810 413" font-family="Liberation Sans, sans-serif"><line x1="537.0" y1="260.10" x2="767.6" y2="260.10" stroke="#dcdcdc" stroke-width="0.7"/><line x1="534" y1="260.10" x2="537.0" y2="260.10" stroke="#6e7079" stroke-width="0.6"/><text x="533" y="261.90" font-size="5.6" fill="#6e7079" text-anchor="end">300</text><line x1="537.0" y1="218.20" x2="767.6" y2="218.20" stroke="#dcdcdc" stroke-width="0.7"/><line x1="534" y1="218.20" x2="537.0" y2="218.20" stroke="#6e7079" stroke-width="0.6"/><text x="533" y="220.00" font-size="5.6" fill="#6e7079" text-anchor="end">600</text><line x1="537.0" y1="176.30" x2="767.6" y2="176.30" stroke="#dcdcdc" stroke-width="0.7"/><line x1="534" y1="176.30" x2="537.0" y2="176.30" stroke="#6e7079" stroke-width="0.6"/><text x="533" y="178.10" font-size="5.6" fill="#6e7079" text-anchor="end">900</text><line x1="537.0" y1="134.40" x2="767.6" y2="134.40" stroke="#dcdcdc" stroke-width="0.7"/><line x1="534" y1="134.40" x2="537.0" y2="134.40" stroke="#6e7079" stroke-width="0.6"/><text x="533" y="136.20" font-size="5.6" fill="#6e7079" text-anchor="end">1,200</text><line x1="537.0" y1="92.50" x2="767.6" y2="92.50" stroke="#dcdcdc" stroke-width="0.7"/><line x1="534" y1="92.50" x2="537.0" y2="92.50" stroke="#6e7079" stroke-width="0.6"/><text x="533" y="94.30" font-size="5.6" fill="#6e7079" text-anchor="end">1,500</text><text x="533" y="303.80" font-size="5.6" fill="#6e7079" text-anchor="end">0</text><line x1="534" y1="302.0" x2="537.0" y2="302.0" stroke="#6e7079" stroke-width="0.6"/><line x1="537.0" y1="92.50" x2="537.0" y2="302.0" stroke="#a3a6ad" stroke-width="0.7"/><line x1="537.0" y1="302.0" x2="767.6" y2="302.0" stroke="#8e9198" stroke-width="0.7"/><rect x="545.96" y="114.43" width="27.4" height="187.57" fill="#023767"/><text x="560.06" y="110.93" font-size="5.6" fill="#4b5f80" text-anchor="middle">1343</text><line x1="583.12" y1="302.0" x2="583.12" y2="304.2" stroke="#6e7079" stroke-width="0.6"/><g transform="translate(559.06,307.5) rotate(45)"><rect class="cb" x="0.32" y="-4.50" width="4.66" height="4.24" fill="#6e7079" opacity="0.3"/><rect class="cb" x="5.62" y="-4.50" width="4.66" height="4.24" fill="#6e7079" opacity="0.3"/><rect class="cb" x="10.92" y="-4.50" width="4.66" height="4.24" fill="#6e7079" opacity="0.3"/><rect class="cb" x="17.98" y="-4.50" width="4.66" height="4.24" fill="#6e7079" opacity="0.3"/><rect class="cb" x="23.28" y="-4.50" width="4.66" height="4.24" fill="#6e7079" opacity="0.3"/><rect class="cb" x="28.58" y="-4.50" width="4.66" height="4.24" fill="#6e7079" opacity="0.3"/><text font-size="5.3" fill="#6e7079" x="0.00 5.30 10.60 15.90 17.66 22.96 28.26 33.56">成品库(二号库)</text></g><rect x="592.08" y="188.31" width="27.4" height="113.69" fill="#023767"/><text x="606.18" y="184.81" font-size="5.6" fill="#4b5f80" text-anchor="middle">814</text><line x1="629.24" y1="302.0" x2="629.24" y2="304.2" stroke="#6e7079" stroke-width="0.6"/><g transform="translate(605.18,307.5) rotate(45)"><rect class="cb" x="0.32" y="-4.50" width="4.66" height="4.24" fill="#6e7079" opacity="0.3"/><rect class="cb" x="5.62" y="-4.50" width="4.66" height="4.24" fill="#6e7079" opacity="0.3"/><rect class="cb" x="10.92" y="-4.50" width="4.66" height="4.24" fill="#6e7079" opacity="0.3"/><text font-size="5.3" fill="#6e7079" x="0.00 5.30 10.60">成品库</text></g><rect x="638.20" y="287.75" width="27.4" height="14.25" fill="#023767"/><text x="652.30" y="284.25" font-size="5.6" fill="#4b5f80" text-anchor="middle">102</text><line x1="675.36" y1="302.0" x2="675.36" y2="304.2" stroke="#6e7079" stroke-width="0.6"/><g transform="translate(651.30,307.5) rotate(45)"><rect class="cb" x="6.80" y="-4.50" width="4.66" height="4.24" fill="#6e7079" opacity="0.3"/><rect class="cb" x="12.10" y="-4.50" width="4.66" height="4.24" fill="#6e7079" opacity="0.3"/><rect class="cb" x="17.40" y="-4.50" width="4.66" height="4.24" fill="#6e7079" opacity="0.3"/><text font-size="5.3" fill="#6e7079" x="0.00 3.54 6.48 11.78 17.08">B4原料库</text></g><rect x="684.32" y="301.58" width="27.4" height="0.42" fill="#023767"/><text x="698.42" y="298.08" font-size="5.6" fill="#4b5f80" text-anchor="middle">3</text><line x1="721.48" y1="302.0" x2="721.48" y2="304.2" stroke="#6e7079" stroke-width="0.6"/><g transform="translate(697.42,307.5) rotate(45)"><rect class="cb" x="0.32" y="-4.50" width="4.66" height="4.24" fill="#6e7079" opacity="0.3"/><rect class="cb" x="5.62" y="-4.50" width="4.66" height="4.24" fill="#6e7079" opacity="0.3"/><rect class="cb" x="10.92" y="-4.50" width="4.66" height="4.24" fill="#6e7079" opacity="0.3"/><rect class="cb" x="16.22" y="-4.50" width="4.66" height="4.24" fill="#6e7079" opacity="0.3"/><rect class="cb" x="21.52" y="-4.50" width="4.66" height="4.24" fill="#6e7079" opacity="0.3"/><rect class="cb" x="26.82" y="-4.50" width="4.66" height="4.24" fill="#6e7079" opacity="0.3"/><rect class="cb" x="32.12" y="-4.50" width="4.66" height="4.24" fill="#6e7079" opacity="0.3"/><text font-size="5.3" fill="#6e7079" x="0.00 5.30 10.60 15.90 21.20 26.50 31.80">低温研究产品库</text></g><rect x="730.44" y="301.72" width="27.4" height="0.28" fill="#023767"/><text x="744.54" y="298.22" font-size="5.6" fill="#4b5f80" text-anchor="middle">2</text><line x1="767.60" y1="302.0" x2="767.60" y2="304.2" stroke="#6e7079" stroke-width="0.6"/><g transform="translate(743.54,307.5) rotate(45)"><rect class="cb" x="0.32" y="-4.50" width="4.66" height="4.24" fill="#6e7079" opacity="0.3"/><rect class="cb" x="5.62" y="-4.50" width="4.66" height="4.24" fill="#6e7079" opacity="0.3"/><rect class="cb" x="10.92" y="-4.50" width="4.66" height="4.24" fill="#6e7079" opacity="0.3"/><rect class="cb" x="16.22" y="-4.50" width="4.66" height="4.24" fill="#6e7079" opacity="0.3"/><rect class="cb" x="21.52" y="-4.50" width="4.66" height="4.24" fill="#6e7079" opacity="0.3"/><text font-size="5.3" fill="#6e7079" x="0.00 5.30 10.60 15.90 21.20">暂存成品库</text></g><line x1="537.0" y1="302.0" x2="537.0" y2="304.2" stroke="#6e7079" stroke-width="0.6"/><rect class="cb" x="622.06" y="79.54" width="6.69" height="6.08" fill="#464646" opacity="0.35"/><rect class="cb" x="629.66" y="79.54" width="6.69" height="6.08" fill="#464646" opacity="0.35"/><rect class="cb" x="637.26" y="79.54" width="6.69" height="6.08" fill="#464646" opacity="0.35"/><rect class="cb" x="644.86" y="79.54" width="6.69" height="6.08" fill="#464646" opacity="0.35"/><rect class="cb" x="652.46" y="79.54" width="6.69" height="6.08" fill="#464646" opacity="0.35"/><rect class="cb" x="660.06" y="79.54" width="6.69" height="6.08" fill="#464646" opacity="0.35"/><rect class="cb" x="667.66" y="79.54" width="6.69" height="6.08" fill="#464646" opacity="0.35"/><rect class="cb" x="675.26" y="79.54" width="6.69" height="6.08" fill="#464646" opacity="0.35"/><text y="86" font-size="7.6" font-weight="bold" fill="#464646" x="621.60 629.20 636.80 644.40 652.00 659.60 667.20 674.80">仓库库存排量图表</text><rect x="793.9" y="70.9" width="6.1" height="6" fill="#b5b5b5"/><rect x="793.9" y="70.9" width="6.1" height="1.3" fill="#444"/><rect x="793.9" y="75.6" width="6.1" height="1.3" fill="#444"/><rect x="793.9" y="72.2" width="0.7" height="3.4" fill="#555"/><rect x="799.3" y="72.2" width="0.7" height="3.4" fill="#555"/></svg></body></html>
